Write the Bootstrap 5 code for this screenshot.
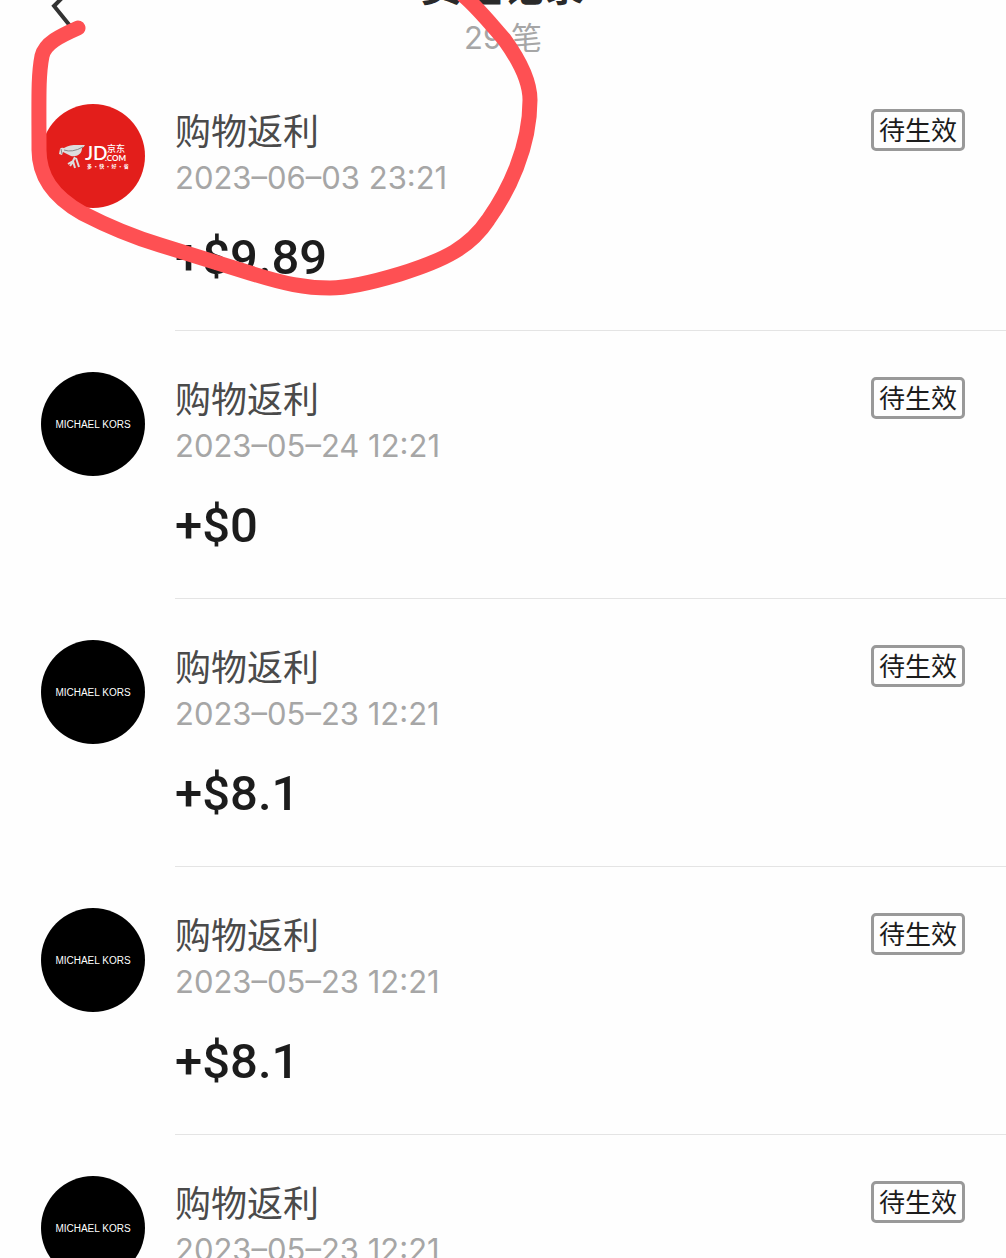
<!DOCTYPE html>
<html lang="zh-CN">
<head>
<meta charset="utf-8">
<meta name="viewport" content="width=device-width, initial-scale=1">
<title>资金记录</title>
<link href="https://cdn.jsdelivr.net/npm/bootstrap@5.3.0/dist/css/bootstrap.min.css" rel="stylesheet">
<style>
body { font-family: Inter, "Noto Sans CJK SC", sans-serif; background: #fefefe; color: #1c1c1c; height: 100vh; overflow: hidden; }
.topbar { height: 63px; }
.back-btn { left: 48px; top: -14px; width: 32px; height: 44px; }
.page-title { font-size: 41px; line-height: 48px; margin-top: -38px; color: #2a2a2a; }
.page-count { font-size: 31px; line-height: 40px; margin-top: 8px; color: #a6a6a6; }
.record { padding: 41px 0 0 41px; gap: 30px; }
.logo-disc { width: 104px; height: 104px; }
.record-body { height: 227px; border-bottom: 1px solid #e4e4e4; padding-right: 41px; }
.kind { font-size: 36px; line-height: 56px; color: #4a4a4a; }
.stamp { font-size: 31px; line-height: 36px; color: #a6a6a6; }
.amount { font-family: Roboto, sans-serif; font-size: 49px; line-height: 60px; margin-top: 32px; font-weight: 500; }
.state { font-size: 26px; line-height: 34px; margin-top: 5px; padding: 2px 5px 0; border: 3px solid #999; border-radius: 5px; }
.marker { width: 560px; height: 310px; pointer-events: none; }
</style>
<script src="https://cdn.jsdelivr.net/npm/bootstrap@5.3.0/dist/js/bootstrap.bundle.min.js"></script>
</head>
<body class="position-relative">
<svg class="d-none">
  <symbol id="mk" viewBox="0 0 104 104">
    <circle cx="52" cy="52" r="52" fill="#000"/>
    <text x="52" y="56" text-anchor="middle" font-family="Liberation Sans, sans-serif" font-size="10" fill="#fff">MICHAEL KORS</text>
  </symbol>
</svg>
<header class="topbar position-relative d-flex flex-column align-items-center">
  <button type="button" class="back-btn btn p-0 border-0 position-absolute" aria-label="返回">
    <svg class="d-block" width="32" height="44" viewBox="0 0 32 44" fill="none" stroke="#333" stroke-width="4"><path d="M24 2L6 20L23 41"/></svg>
  </button>
  <h1 class="page-title fw-bold mb-0">资金记录</h1>
  <div class="page-count">29 笔</div>
</header>
<main>
  <article class="record d-flex">
    <svg class="logo-disc flex-shrink-0" viewBox="0 0 104 104" role="img" aria-label="JD.COM 京东">
      <circle cx="52" cy="52" r="52" fill="#e31e1b"/>
      <path d="M18 50L19 45Q20 43 23 44C29 40 36 41 44 41Q43 43 41 44C41 50 36 53 30 52L22 48L21 51Z" fill="#ddd"/>
      <path d="M20 45L21 50M23 46Q31 49 42 43" stroke="#888" fill="none"/>
      <path d="M34 53L32 57L27 60M35 54L38 63M32 57L34 64M32 58L29 62" stroke="#ddd" stroke-width="2" fill="none"/>
      <g fill="#fff" font-family="Lato, sans-serif">
        <text x="44" y="56" font-size="19" font-weight="600">JD</text>
        <text x="64" y="57" font-size="8" font-weight="700">.COM</text>
        <text x="66" y="48" font-size="9" font-weight="500" font-family="Noto Sans CJK SC, sans-serif">京东</text>
        <text x="46" y="64" font-size="5" font-weight="700" font-family="Noto Sans CJK SC, sans-serif">多 · 快 · 好 · 省</text>
      </g>
    </svg>
    <div class="record-body flex-grow-1 d-flex justify-content-between align-items-start">
      <div><div class="kind">购物返利</div><div class="stamp">2023–06–03 23:21</div><div class="amount">+$9.89</div></div>
      <span class="state">待生效</span>
    </div>
  </article>
  <article class="record d-flex">
    <svg class="logo-disc flex-shrink-0"><use href="#mk"/></svg>
    <div class="record-body flex-grow-1 d-flex justify-content-between align-items-start">
      <div><div class="kind">购物返利</div><div class="stamp">2023–05–24 12:21</div><div class="amount">+$0</div></div>
      <span class="state">待生效</span>
    </div>
  </article>
  <article class="record d-flex">
    <svg class="logo-disc flex-shrink-0"><use href="#mk"/></svg>
    <div class="record-body flex-grow-1 d-flex justify-content-between align-items-start">
      <div><div class="kind">购物返利</div><div class="stamp">2023–05–23 12:21</div><div class="amount">+$8.1</div></div>
      <span class="state">待生效</span>
    </div>
  </article>
  <article class="record d-flex">
    <svg class="logo-disc flex-shrink-0"><use href="#mk"/></svg>
    <div class="record-body flex-grow-1 d-flex justify-content-between align-items-start">
      <div><div class="kind">购物返利</div><div class="stamp">2023–05–23 12:21</div><div class="amount">+$8.1</div></div>
      <span class="state">待生效</span>
    </div>
  </article>
  <article class="record d-flex">
    <svg class="logo-disc flex-shrink-0"><use href="#mk"/></svg>
    <div class="record-body flex-grow-1 d-flex justify-content-between align-items-start">
      <div><div class="kind">购物返利</div><div class="stamp">2023–05–23 12:21</div></div>
      <span class="state">待生效</span>
    </div>
  </article>
</main>
<svg class="marker position-absolute top-0 start-0" viewBox="0 0 560 310" fill="none" stroke="#fe5053" stroke-width="15" stroke-linecap="round" stroke-linejoin="round" aria-hidden="true">
  <path d="M78 28C60 36 45 43 42 56C38 76 39 100 39 150C39 176 52 196 82 213C115 230 140 239 160 245L250 273C285 284 305 288 330 288C352 288 380 280 400 274C445 260 470 247 488 220C508 192 530 148 530 100C530 82 520 61 504 39C490 23 478 8 464 -4"/>
</svg>
</body>
</html>
